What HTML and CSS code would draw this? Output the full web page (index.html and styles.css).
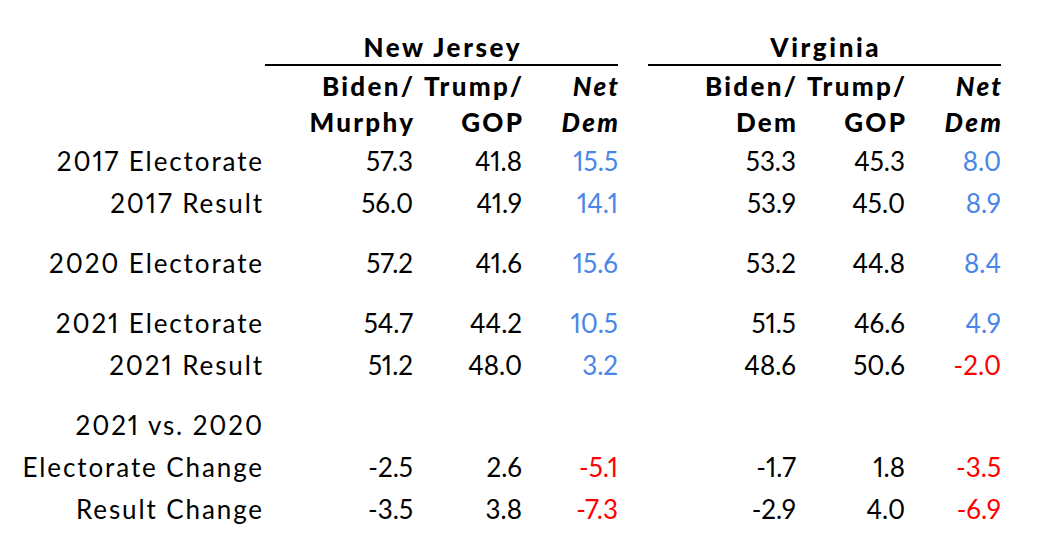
FILE: index.html
```html
<!DOCTYPE html>
<html lang="en">
<head>
<meta charset="utf-8">
<title>New Jersey and Virginia electorate</title>
<link rel="stylesheet" href="styles.css">
</head>
<body>
<div class="table">
  <div class="row states">
    <div class="label"></div>
    <div class="state">New Jersey</div>
    <div class="sep"></div>
    <div class="state">Virginia</div>
  </div>
  <div class="row head">
    <div class="label"></div>
    <div class="h">Biden/<br>Murphy</div>
    <div class="h">Trump/<br>GOP</div>
    <div class="h net">Net<br>Dem</div>
    <div class="sep"></div>
    <div class="h">Biden/<br>Dem</div>
    <div class="h">Trump/<br>GOP</div>
    <div class="h net">Net<br>Dem</div>
  </div>
  <div class="row data">
    <div class="label">2017 Electorate</div>
    <div class="n">57.3</div><div class="n">41.8</div><div class="n pos">15.5</div>
    <div class="sep"></div>
    <div class="n">53.3</div><div class="n">45.3</div><div class="n pos">8.0</div>
  </div>
  <div class="row data">
    <div class="label">2017 Result</div>
    <div class="n">56.0</div><div class="n">41.9</div><div class="n pos">14.1</div>
    <div class="sep"></div>
    <div class="n">53.9</div><div class="n">45.0</div><div class="n pos">8.9</div>
  </div>
  <div class="row data group">
    <div class="label">2020 Electorate</div>
    <div class="n">57.2</div><div class="n">41.6</div><div class="n pos">15.6</div>
    <div class="sep"></div>
    <div class="n">53.2</div><div class="n">44.8</div><div class="n pos">8.4</div>
  </div>
  <div class="row data group">
    <div class="label">2021 Electorate</div>
    <div class="n">54.7</div><div class="n">44.2</div><div class="n pos">10.5</div>
    <div class="sep"></div>
    <div class="n">51.5</div><div class="n">46.6</div><div class="n pos">4.9</div>
  </div>
  <div class="row data">
    <div class="label">2021 Result</div>
    <div class="n">51.2</div><div class="n">48.0</div><div class="n pos">3.2</div>
    <div class="sep"></div>
    <div class="n">48.6</div><div class="n">50.6</div><div class="n neg">-2.0</div>
  </div>
  <div class="row data group">
    <div class="label">2021 vs. 2020</div>
  </div>
  <div class="row data">
    <div class="label">Electorate Change</div>
    <div class="n">-2.5</div><div class="n">2.6</div><div class="n neg">-5.1</div>
    <div class="sep"></div>
    <div class="n">-1.7</div><div class="n">1.8</div><div class="n neg">-3.5</div>
  </div>
  <div class="row data">
    <div class="label">Result Change</div>
    <div class="n">-3.5</div><div class="n">3.8</div><div class="n neg">-7.3</div>
    <div class="sep"></div>
    <div class="n">-2.9</div><div class="n">4.0</div><div class="n neg">-6.9</div>
  </div>
</div>
</body>
</html>
```

FILE: styles.css
```css
html, body {
  margin: 0;
  padding: 0;
  background: #ffffff;
}

.table {
  padding-top: 30px;
  font-family: "Lato", "Liberation Sans", sans-serif;
  font-size: 26px;
  color: #000000;
  font-variant-numeric: proportional-nums;
}

.row {
  display: grid;
  grid-template-columns: 265px 148px 109px 96px 30px 148px 109px 96px;
}

.label {
  text-align: right;
  padding-right: 1px;
  letter-spacing: 1.9px;
}

.states {
  line-height: 34px;
  font-weight: 900;
}

.state {
  grid-column: span 3;
  text-align: center;
  letter-spacing: 2.6px;
  padding-left: 2.6px;
  border-bottom: 2px solid #000000;
}

.head {
  margin-top: 2px;
  line-height: 36px;
  font-weight: 900;
}

.h {
  text-align: right;
  letter-spacing: 2.3px;
  margin-right: -2.3px;
}

.net {
  font-style: italic;
}

.data {
  line-height: 42px;
}

.group {
  margin-top: 18px;
}

.n {
  text-align: right;
}

.pos {
  color: #4a86e8;
}

.neg {
  color: #ff0000;
}
```
